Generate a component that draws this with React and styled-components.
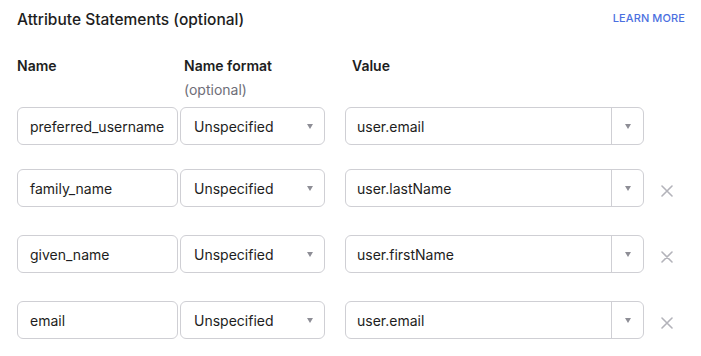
import React from 'react'
import styled, { createGlobalStyle } from 'styled-components'

const GlobalStyle = createGlobalStyle`
  body {
    margin: 0;
    background: #ffffff;
    font-family: Inter, "Noto Sans", "Liberation Sans", sans-serif;
    color: #1d1d21;
  }
`

const Page = styled.div`
  width: 701px;
  height: 356px;
  box-sizing: border-box;
  padding: 10px 16px 0 17px;
`

const Header = styled.div`
  display: flex;
  justify-content: space-between;
  align-items: flex-start;
  height: 20px;
`

const Title = styled.h2`
  margin: 0;
  font-size: 15.5px;
  line-height: 20px;
  font-weight: 500;
  color: #1d1d21;
`

const LearnMore = styled.a`
  font-size: 11px;
  line-height: 16px;
  font-weight: 500;
  color: #4b6fe0;
  text-decoration: none;
  letter-spacing: 0.1px;
`

const Columns = styled.div`
  display: flex;
  margin-top: 26px;
  margin-bottom: 7px;
`

const ColLabel = styled.div`
  width: ${p => p.width}px;
  box-sizing: border-box;
  font-size: 14px;
  line-height: 20px;
  font-weight: 600;
  color: #1d1d21;
`

const ColHint = styled.div`
  margin-top: 4px;
  font-weight: 400;
  color: #6e6e78;
`

const Rows = styled.div`
  display: flex;
  flex-direction: column;
  gap: 20px;
`

const Row = styled.div`
  display: flex;
  align-items: center;
  min-height: 38px;
`

const Field = styled.div`
  box-sizing: border-box;
  height: 38px;
  border: 1px solid #cfcfd4;
  border-radius: 6px;
  background: #fff;
  display: flex;
  align-items: center;
  font-size: 14px;
  color: #1d1d21;
`

const NameField = styled(Field)`
  width: 161px;
  padding-left: 12px;
`

const FormatSelect = styled(Field)`
  width: 145px;
  margin-left: 2px;
  padding-left: 13px;
  padding-right: 11px;
  justify-content: space-between;
`

const ValueSelect = styled(Field)`
  width: 299px;
  margin-left: 20px;
  overflow: hidden;
`

const ValueText = styled.span`
  flex: 1;
  padding-left: 11px;
`

const ArrowCell = styled.span`
  width: 31px;
  height: 100%;
  border-left: 1px solid #cfcfd4;
  display: flex;
  align-items: center;
  justify-content: center;
`

const Caret = styled.span`
  width: 0;
  height: 0;
  border-left: 3.5px solid transparent;
  border-right: 3.5px solid transparent;
  border-top: 5px solid #8e8e96;
`

const DeleteButton = styled.button`
  height: 46px;
  width: 30px;
  margin-left: 8px;
  padding: 6px 0 0;
  border: none;
  background: none;
  display: flex;
  align-items: center;
  justify-content: center;
  cursor: pointer;
`

const CloseIcon = () => (
  <svg width="12" height="12" viewBox="0 0 12 12">
    <path d="M1 1L11 11M11 1L1 11" stroke="#b3b3ba" strokeWidth="1.6" strokeLinecap="round" />
  </svg>
)

const attributes = [
  { name: 'preferred_username', value: 'user.email', removable: false },
  { name: 'family_name', value: 'user.lastName', removable: true },
  { name: 'given_name', value: 'user.firstName', removable: true },
  { name: 'email', value: 'user.email', removable: true },
]

const AttributeRow = ({ name, value, removable }) => (
  <Row>
    <NameField>{name}</NameField>
    <FormatSelect>
      <span>Unspecified</span>
      <Caret />
    </FormatSelect>
    <ValueSelect>
      <ValueText>{value}</ValueText>
      <ArrowCell><Caret /></ArrowCell>
    </ValueSelect>
    {removable && (
      <DeleteButton aria-label="Remove">
        <CloseIcon />
      </DeleteButton>
    )}
  </Row>
)

export default function App() {
  return (
    <>
      <GlobalStyle />
      <Page>
        <Header>
          <Title>Attribute Statements (optional)</Title>
          <LearnMore href="#">LEARN MORE</LearnMore>
        </Header>
        <Columns>
          <ColLabel width={167}>Name</ColLabel>
          <ColLabel width={168}>
            Name format
            <ColHint>(optional)</ColHint>
          </ColLabel>
          <ColLabel width={120}>Value</ColLabel>
        </Columns>
        <Rows>
          {attributes.map(a => <AttributeRow key={a.name} {...a} />)}
        </Rows>
      </Page>
    </>
  )
}
